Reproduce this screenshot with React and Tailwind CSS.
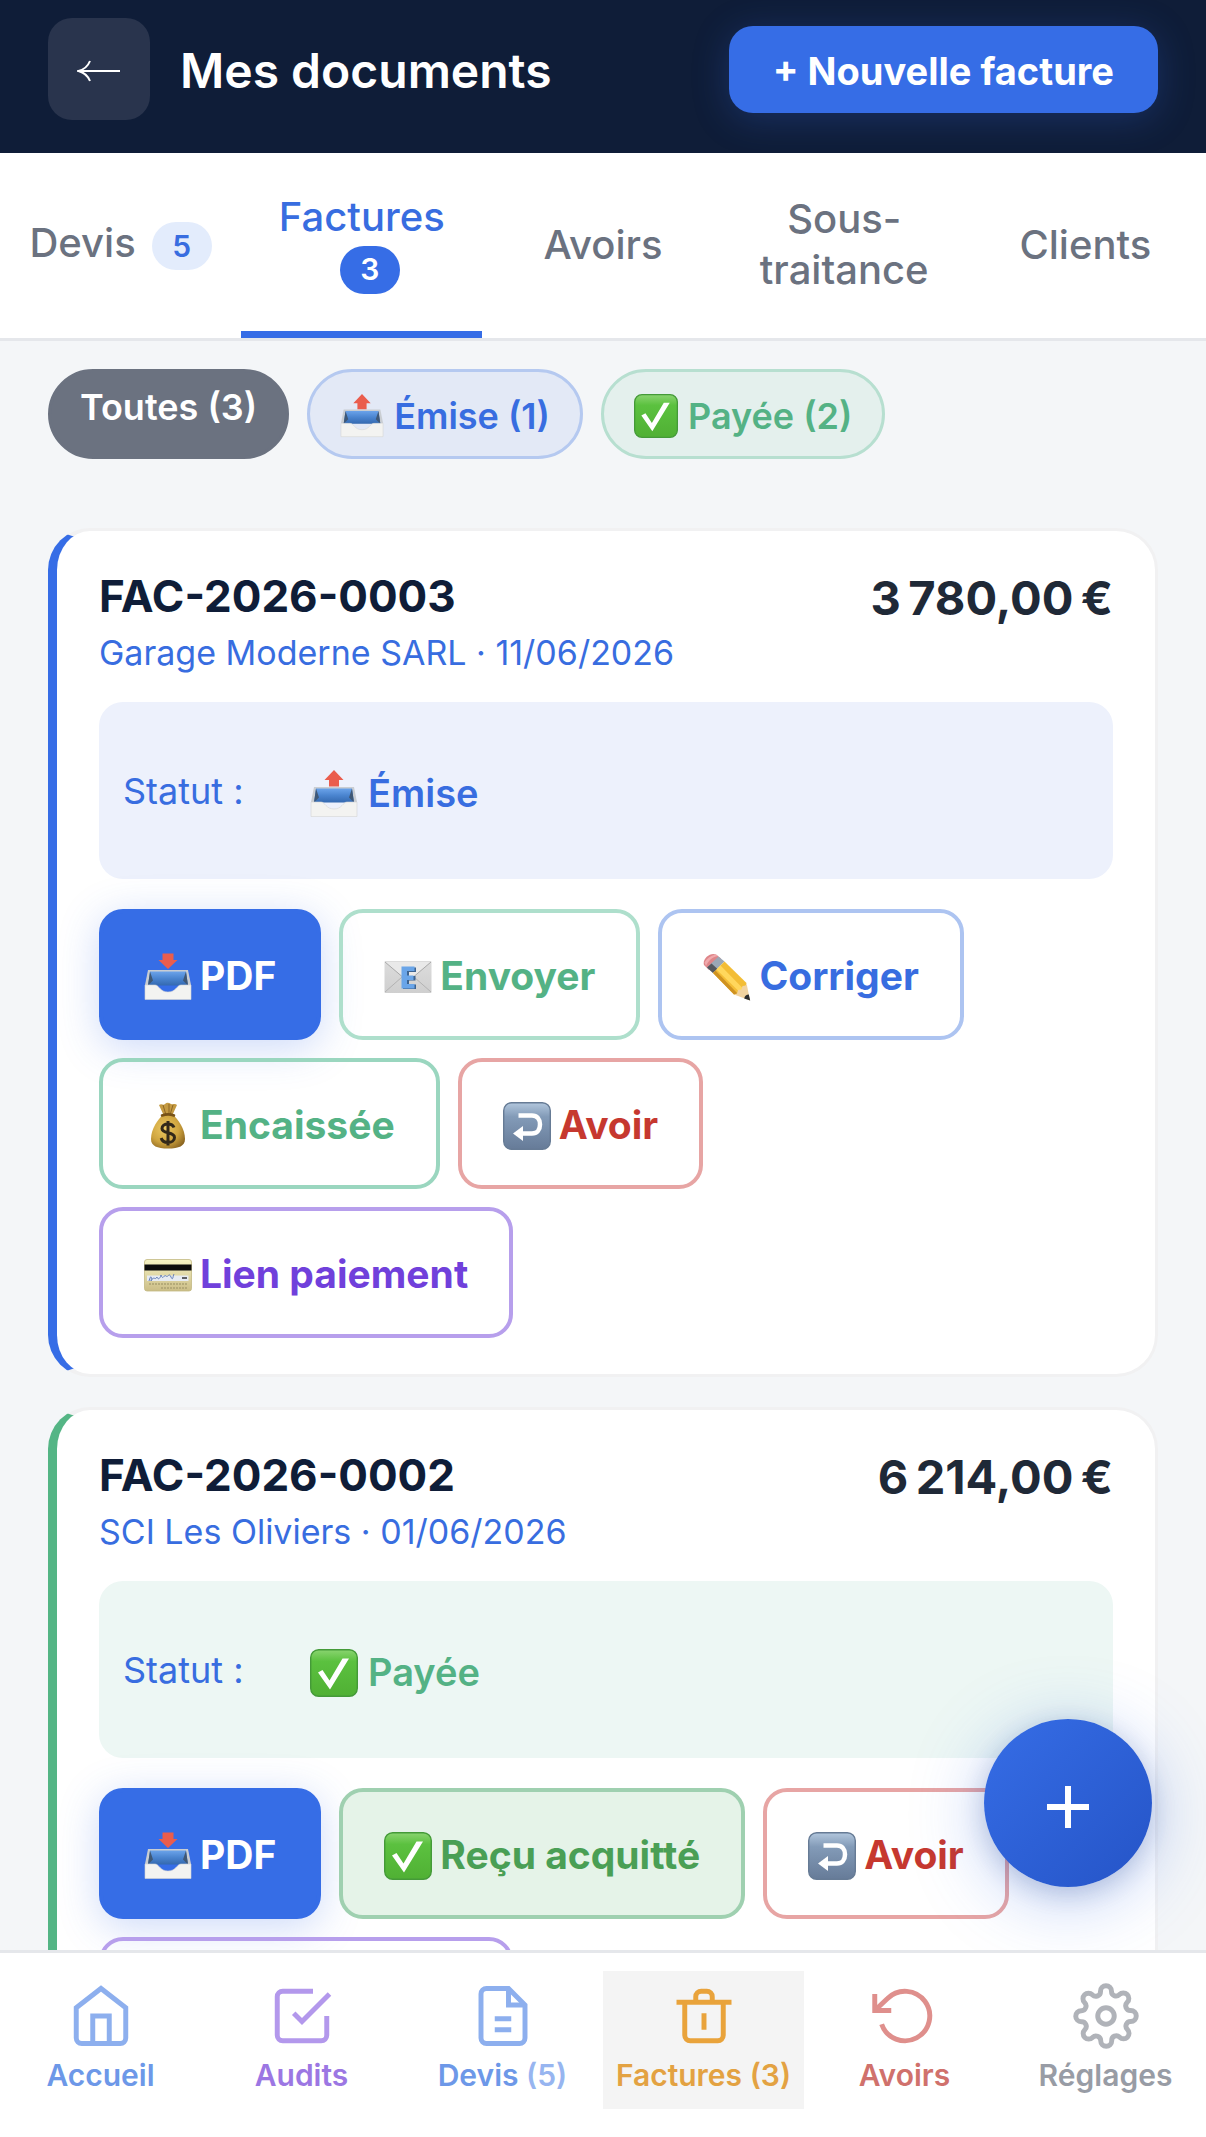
import React, { useState } from 'react';

/* ---------- Petites illustrations ---------- */

function Tray({ direction, className }) {
  const isUp = direction === 'up';
  return (
    <svg viewBox="0 0 48 48" className={className} aria-hidden="true">
      <defs>
        <linearGradient id={`tray-${direction}`} x1="0" y1="0" x2="0" y2="1">
          <stop offset="0" stopColor="#6ba3ea" />
          <stop offset="0.5" stopColor="#4a84cf" />
          <stop offset="1" stopColor="#3469b0" />
        </linearGradient>
      </defs>
      <path d="M4 17h40l3 15H1z" fill="#c9cdd2" />
      <path d="M6 18.500h36l2 14H4z" fill={`url(#tray-${direction})`} />
      <path d="M6 18.500l3 9-5 5zM42 18.500l-3 9 5 5z" fill="#3f5876" />
      <path
        d="M1 32h10c4 0 5 7 13 7s9-7 13-7h10v14.500H1z"
        fill="#f3f3f1"
        stroke="#d5d5d3"
        strokeWidth="0.600"
      />
      {isUp ? (
        <path d="M24 0l9.500 10H29v6.500H19V10h-4.500z" fill="#ea5d4d" />
      ) : (
        <path d="M24 16L14.500 7H18.500V0.500h11V7h4z" fill="#ea5d4d" />
      )}
    </svg>
  );
}

function CheckBadge({ className }) {
  return (
    <svg viewBox="0 0 48 48" className={className} aria-hidden="true">
      <defs>
        <linearGradient id="check-bg" x1="0" y1="0" x2="0" y2="1">
          <stop offset="0" stopColor="#8ad470" />
          <stop offset="0.250" stopColor="#5bc13f" />
          <stop offset="1" stopColor="#50b034" />
        </linearGradient>
      </defs>
      <rect x="0.700" y="0.700" width="46.600" height="46.600" rx="8" fill="url(#check-bg)" stroke="#449a38" strokeWidth="1.400" />
      <path d="M8 23.500l4.500-2.500 7 10.500L32.500 9.500H39L20 40.500z" fill="#fff" />
    </svg>
  );
}

function EmailBadge({ className }) {
  return (
    <svg viewBox="0 0 48 48" className={className} aria-hidden="true">
      <defs>
        <linearGradient id="mail-bg" x1="0" y1="0" x2="0" y2="1">
          <stop offset="0" stopColor="#dcdcdc" />
          <stop offset="1" stopColor="#cfcfcf" />
        </linearGradient>
      </defs>
      <rect x="0.500" y="8" width="47" height="32" rx="1" fill="url(#mail-bg)" />
      <path d="M1 9l20 17c2 1.600 4 1.600 6 0L47 9" fill="#e9e9e9" stroke="#a9a9a9" strokeWidth="1" />
      <path d="M1 39l17-15M47 39L30 24" stroke="#b3b3b3" strokeWidth="1" />
      <path d="M19 14.500h13v4.500h-7v4h6.500v4.500H25v4h7V36H19z" fill="#3d6390" />
      <path d="M17.500 13.500h13V18h-7.500v4.500h6.500V27H23v4h7.500v4.500h-13z" fill="#6aa5e8" />
    </svg>
  );
}

function Pencil({ className }) {
  return (
    <svg viewBox="0 0 48 48" className={className} aria-hidden="true">
      <path d="M1 12C-1 6 7-1 13 1.500l5 4L6 17z" fill="#de8589" />
      <path d="M1.500 9.500C4 5 8 2.500 13 1.500l2 1.500C9 4 5 8 3 13z" fill="#f0a9ac" />
      <path d="M4 14.500L15.500 3.500l6 5L10 20z" fill="#9ba7b5" />
      <path d="M4 14.500l4.500-4 6 5.500L10 20z" fill="#55585e" />
      <path d="M10 20L21.500 8.500 43.500 30l-1 3.500-8 8.500-3.500-.5z" fill="#f3bd35" />
      <path d="M13.500 16.500l4-4 23.500 24-4 3z" fill="#ffd75c" />
      <path d="M10 20l2.500-2.500L35 41l-4 .5z" fill="#cf9221" />
      <path d="M43.500 30L47 47.500 31 41.500l3-1 1-3.500 3.500-.500 1-3.500 3.500-.5z" fill="#f2d3a0" />
      <path d="M45.800 41.500l1.400 6-6-2c.5-2.500 2.200-4 4.600-4z" fill="#2c2c2e" />
    </svg>
  );
}

function MoneyBag({ className }) {
  return (
    <svg viewBox="0 0 48 48" className={className} aria-hidden="true">
      <defs>
        <radialGradient id="bag-bg" cx="0.400" cy="0.400" r="0.700">
          <stop offset="0" stopColor="#ecc962" />
          <stop offset="0.600" stopColor="#cfa43e" />
          <stop offset="1" stopColor="#8b6521" />
        </radialGradient>
      </defs>
      <path d="M15 3c3-2 4 1 6-1s4-1 6 0 4-1 6 1l-5 11h-8z" fill="#c49a42" />
      <path d="M19 3l3 10M25 2v11M29 3l-3 10" stroke="#8b6523" strokeWidth="1" />
      <path d="M19 13h10c5 4 12 14 12 24 0 7-6 9.500-17 9.500S7 44 7 37c0-10 7-20 12-24z" fill="url(#bag-bg)" />
      <path d="M18 13.500c4-1.500 8-1.500 12 0" stroke="#775218" strokeWidth="2.500" fill="none" strokeLinecap="round" />
      <path
        d="M30 25.500c-1-2.500-3.500-3.500-6-3.500-3.500 0-6 1.700-6 4.500 0 6 12.500 2.500 12.500 9 0 3-2.800 5-6.500 5-3.300 0-6-1.500-6.800-4.500M24 19v24.500"
        stroke="#33291a"
        strokeWidth="3"
        fill="none"
      />
    </svg>
  );
}

function ReturnArrow({ className }) {
  return (
    <svg viewBox="0 0 48 48" className={className} aria-hidden="true">
      <defs>
        <linearGradient id="return-bg" x1="0" y1="0" x2="0" y2="1">
          <stop offset="0" stopColor="#b2c7dd" />
          <stop offset="0.300" stopColor="#839bb8" />
          <stop offset="1" stopColor="#667b98" />
        </linearGradient>
      </defs>
      <rect x="0.700" y="0.700" width="46.600" height="46.600" rx="8" fill="url(#return-bg)" stroke="#667b95" strokeWidth="1.400" />
      <path d="M15.500 13.500H29c5 0 8 3.500 8 9s-3 9-8 9H18" stroke="#fff" strokeWidth="4.500" fill="none" />
      <path d="M10 31.500l10-7.500v15z" fill="#fff" />
    </svg>
  );
}

function CreditCard({ className }) {
  return (
    <svg viewBox="0 0 48 48" className={className} aria-hidden="true">
      <defs>
        <linearGradient id="card-bg" x1="0" y1="0" x2="0" y2="1">
          <stop offset="0" stopColor="#f6f3c4" />
          <stop offset="1" stopColor="#cbbd86" />
        </linearGradient>
      </defs>
      <rect x="0.500" y="8.500" width="47" height="31.500" rx="2.500" fill="url(#card-bg)" stroke="#c3b983" strokeWidth="0.800" />
      <rect x="0.500" y="13.500" width="47" height="6" fill="#0b0b0b" />
      <rect x="3" y="24.500" width="41.500" height="5.500" fill="#e6ebf2" />
      <path
        d="M5 30c2-7 3-4 2 0 3-6 4 0 6-4 1 3 3 2 4-2 2 6 3-1 5 1s3-4 5 1 2-2 3-3"
        stroke="#6580b8"
        strokeWidth="1"
        fill="none"
      />
      <path d="M38 27h5" stroke="#333" strokeWidth="1.500" />
      <path d="M5 33h38M17 37h26" stroke="#aca172" strokeWidth="1.600" strokeDasharray="2 1" />
    </svg>
  );
}

const EMOJIS = {
  inbox: (cls) => <Tray direction="down" className={cls} />,
  outbox: (cls) => <Tray direction="up" className={cls} />,
  check: (cls) => <CheckBadge className={cls} />,
  email: (cls) => <EmailBadge className={cls} />,
  pencil: (cls) => <Pencil className={cls} />,
  money: (cls) => <MoneyBag className={cls} />,
  back: (cls) => <ReturnArrow className={cls} />,
  card: (cls) => <CreditCard className={cls} />,
};

/* ---------- Données ---------- */

const tabs = [
  { id: 'devis', label: 'Devis', count: 5 },
  { id: 'factures', label: 'Factures', count: 3 },
  { id: 'avoirs', label: 'Avoirs' },
  { id: 'sous-traitance', label: 'Sous-traitance' },
  { id: 'clients', label: 'Clients' },
];

const ACTIONS = {
  pdf: {
    label: 'PDF',
    emoji: 'inbox',
    style: 'border-[#366de6] bg-[#366de6] text-white shadow-[0_8px_40px_rgba(54,109,230,0.25)]',
  },
  envoyer: { label: 'Envoyer', emoji: 'email', style: 'border-[#aedfcc] text-[#54b285]' },
  corriger: { label: 'Corriger', emoji: 'pencil', style: 'border-[#adc4f1] text-[#386de0]' },
  encaissee: { label: 'Encaissée', emoji: 'money', style: 'border-[#9ad6bf] text-[#54b285]' },
  recu: { label: 'Reçu acquitté', emoji: 'check', style: 'border-[#9fd0b0] bg-[#e5f3e8] text-[#4a9f55]' },
  avoir: { label: 'Avoir', emoji: 'back', style: 'border-[#e7a5a4] text-[#c6382f]' },
  lien: { label: 'Lien paiement', emoji: 'card', style: 'border-[#b79fec] text-[#7040db]' },
};

const factures = [
  {
    numero: 'FAC-2026-0003',
    client: 'Garage Moderne SARL',
    date: '11/06/2026',
    montant: '3\u202f780,00\u202f€',
    statut: 'Émise',
    emoji: 'outbox',
    border: 'border-l-[#366de6]',
    box: 'bg-[#edf1fc]',
    text: 'text-[#386de0]',
    actions: ['pdf', 'envoyer', 'corriger', 'encaissee', 'avoir', 'lien'],
  },
  {
    numero: 'FAC-2026-0002',
    client: 'SCI Les Oliviers',
    date: '01/06/2026',
    montant: '6\u202f214,00\u202f€',
    statut: 'Payée',
    emoji: 'check',
    border: 'border-l-[#54b585]',
    box: 'bg-[#edf7f4]',
    text: 'text-[#54b285]',
    actions: ['pdf', 'recu', 'avoir', 'lien'],
  },
];

const navItems = [
  {
    label: 'Accueil',
    icon: 'text-[#8dafee]',
    text: 'text-[#6d98e8]',
    drawing: (
      <>
        <path d="M3 9l9-7 9 7v11a2 2 0 0 1-2 2H5a2 2 0 0 1-2-2z" />
        <path d="M9 22V12h6v10" />
      </>
    ),
  },
  {
    label: 'Audits',
    icon: 'text-[#b398ec]',
    text: 'text-[#9c77e3]',
    drawing: (
      <>
        <path d="M9 11l3 3L22 4" />
        <path d="M21 12v7a2 2 0 0 1-2 2H5a2 2 0 0 1-2-2V5a2 2 0 0 1 2-2h11" />
      </>
    ),
  },
  {
    label: 'Devis',
    count: 5,
    icon: 'text-[#8dafee]',
    text: 'text-[#6d98e8]',
    drawing: (
      <>
        <path d="M14 2H6a2 2 0 0 0-2 2v16a2 2 0 0 0 2 2h12a2 2 0 0 0 2-2V8z" />
        <path d="M14 2v6h6M9 13h6M9 17h6" />
      </>
    ),
  },
  {
    label: 'Factures',
    count: 3,
    active: true,
    icon: 'text-[#e9a33b]',
    text: 'text-[#e3a242]',
    drawing: (
      <>
        <path d="M2 7h20M5 7v12a2 2 0 0 0 2 2h10a2 2 0 0 0 2-2V7" />
        <path d="M9 7V5a2 2 0 0 1 2-2h2a2 2 0 0 1 2 2v2M12 11v6" />
      </>
    ),
  },
  {
    label: 'Avoirs',
    icon: 'text-[#df8f8c]',
    text: 'text-[#d0716c]',
    drawing: (
      <>
        <path d="M1 4v6h6" />
        <path d="M3.510 15a9 9 0 1 0 2.130-9.360L1 10" />
      </>
    ),
  },
  {
    label: 'Réglages',
    icon: 'text-[#b0b3b9]',
    text: 'text-[#989ca5]',
    drawing: (
      <>
        <circle cx="12" cy="12" r="3" />
        <path d="M19.400 15a1.650 1.650 0 0 0 .33 1.820l.06.06a2 2 0 0 1 0 2.830 2 2 0 0 1-2.830 0l-.06-.06a1.650 1.650 0 0 0-1.820-.33 1.650 1.650 0 0 0-1 1.510V21a2 2 0 0 1-2 2 2 2 0 0 1-2-2v-.09A1.650 1.650 0 0 0 9 19.400a1.650 1.650 0 0 0-1.820.33l-.06.06a2 2 0 0 1-2.830 0 2 2 0 0 1 0-2.830l.06-.06a1.650 1.650 0 0 0 .33-1.820 1.650 1.650 0 0 0-1.510-1H3a2 2 0 0 1-2-2 2 2 0 0 1 2-2h.09A1.650 1.650 0 0 0 4.600 9a1.650 1.650 0 0 0-.33-1.820l-.06-.06a2 2 0 0 1 0-2.830 2 2 0 0 1 2.830 0l.06.06a1.650 1.650 0 0 0 1.820.33H9a1.650 1.650 0 0 0 1-1.510V3a2 2 0 0 1 2-2 2 2 0 0 1 2 2v.09a1.650 1.650 0 0 0 1 1.510 1.650 1.650 0 0 0 1.820-.33l.06-.06a2 2 0 0 1 2.830 0 2 2 0 0 1 0 2.830l-.06.06a1.650 1.650 0 0 0-.33 1.820V9a1.650 1.650 0 0 0 1.510 1H21a2 2 0 0 1 2 2 2 2 0 0 1-2 2h-.09a1.650 1.650 0 0 0-1.510 1z" />
      </>
    ),
  },
];

/* ---------- Composants ---------- */

function Header() {
  return (
    <header className="flex items-start justify-between bg-[#0f1d38] px-12 pt-[18px] pb-[33px]">
      <div className="flex items-center gap-[30px]">
        <button
          type="button"
          aria-label="Retour"
          className="flex size-[102px] items-center justify-center rounded-3xl bg-[#29344d] text-white"
        >
          <svg viewBox="0 0 44 22" className="mt-1 w-11" fill="none" stroke="currentColor" strokeWidth="2" aria-hidden="true">
            <path d="M2 11h41M13 1C11 6 7 9.500 1.500 11 7 12.500 11 16 13 21" />
          </svg>
        </button>
        <h1 className="pt-1 text-[48px] font-semibold text-white">Mes documents</h1>
      </div>
      <button
        type="button"
        className="mt-2 h-[87px] rounded-3xl bg-[#366de6] px-11 pt-1 text-[38px] font-bold text-white shadow-[0_6px_36px_rgba(54,109,230,0.25)]"
      >
        + Nouvelle facture
      </button>
    </header>
  );
}

function Tabs({ tab, setTab }) {
  return (
    <div role="tablist" className="grid grid-cols-5 border-b-3 border-[#e5e7eb] bg-white">
      {tabs.map((t) => {
        const active = t.id === tab;
        return (
          <button
            key={t.id}
            type="button"
            role="tab"
            aria-selected={active}
            onClick={() => setTab(t.id)}
            className={`flex h-[185px] items-center justify-center border-b-7 text-[40px] leading-[51px] font-medium ${
              active ? 'flex-col gap-1 border-[#366de6] text-[#386de0]' : 'border-transparent text-[#6b7280]'
            } ${t.count ? '' : 'pt-1'}`}
          >
            <span>{t.label}</span>
            {t.count && (
              <span
                className={`ml-4 flex h-12 w-[60px] items-center justify-center rounded-full text-[30px] font-semibold ${
                  active ? 'bg-[#366de6] text-white' : 'mt-2 bg-[#e3ecfc] text-[#386de0]'
                }`}
              >
                {t.count}
              </span>
            )}
          </button>
        );
      })}
    </div>
  );
}

function Filters() {
  return (
    <div className="flex flex-wrap gap-[18px] text-[36px] leading-[48px] font-semibold">
      <button
        type="button"
        className="flex h-[90px] items-start rounded-full border-3 border-[#6b7280] bg-[#6b7280] px-[29px] pt-[11px] text-white"
      >
        Toutes (3)
      </button>
      <button
        type="button"
        className="flex h-[90px] items-center gap-[10px] rounded-full border-3 border-[#b5c9f0] bg-[#e3e9f6] px-[30px] pt-1 text-[#386de0]"
      >
        <Tray direction="up" className="size-11" />
        Émise (1)
      </button>
      <button
        type="button"
        className="flex h-[90px] items-center gap-[10px] rounded-full border-3 border-[#b7dfd0] bg-[#e4f0ed] px-[30px] pt-1 text-[#54b285]"
      >
        <CheckBadge className="size-11" />
        Payée (2)
      </button>
    </div>
  );
}

function FactureCard({ facture }) {
  const [statut, setStatut] = useState(facture.statut);
  const selectId = `statut-${facture.numero}`;

  return (
    <article
      className={`rounded-[42px] border-3 border-l-9 border-[#f1f1f2] bg-white px-[42px] py-9 ${facture.border}`}
    >
      <div className="flex items-start justify-between">
        <div>
          <h2 className="text-[44px] leading-[58px] font-bold text-[#0f1d38]">{facture.numero}</h2>
          <p className="text-[34px] leading-[56px] text-[#386de0]">
            {facture.client} · {facture.date}
          </p>
        </div>
        <p className="text-[47px] leading-[62px] font-bold text-[#1f2937]">{facture.montant}</p>
      </div>

      <div className={`mt-[21px] flex h-[177px] items-center rounded-3xl px-6 ${facture.box}`}>
        <label htmlFor={selectId} className="w-[187px] text-[36px] text-[#386de0]">
          Statut :
        </label>
        <div className={`flex items-center gap-[10px] pt-1.5 ${facture.text}`}>
          {EMOJIS[facture.emoji]('size-12')}
          <select
            id={selectId}
            value={statut}
            onChange={(e) => setStatut(e.target.value)}
            className="appearance-none bg-transparent text-[38px] font-semibold"
          >
            <option>Émise</option>
            <option>Payée</option>
          </select>
        </div>
      </div>

      <div className="mt-[30px] flex flex-wrap gap-[18px]">
        {facture.actions.map((key) => {
          const action = ACTIONS[key];
          return (
            <button
              key={key}
              type="button"
              className={`flex h-[131px] items-center gap-2 rounded-3xl border-4 px-[41px] pt-1 text-[39px] font-bold ${action.style}`}
            >
              {EMOJIS[action.emoji]('size-12')}
              {action.label}
            </button>
          );
        })}
      </div>
    </article>
  );
}

function BottomNav() {
  return (
    <nav className="grid grid-cols-6 border-t-3 border-[#e5e7eb] bg-white pt-[18px] pb-7">
      {navItems.map((item) => (
        <a
          key={item.label}
          href="#"
          className={`flex flex-col items-center gap-2 pt-3 pb-4 ${item.active ? 'bg-[#f4f4f4]' : ''}`}
        >
          <svg
            viewBox="0 0 24 24"
            className={`size-[66px] ${item.icon}`}
            fill="none"
            stroke="currentColor"
            strokeWidth="1.800"
            aria-hidden="true"
          >
            {item.drawing}
          </svg>
          <span className={`text-[30px] leading-[36px] font-semibold ${item.text}`}>
            {item.label}
            {item.count && <span className={item.active ? '' : 'text-[#97b5f0]'}> ({item.count})</span>}
          </span>
        </a>
      ))}
    </nav>
  );
}

function App() {
  const [tab, setTab] = useState('factures');

  return (
    <div className="relative flex h-screen flex-col bg-[#f4f6f8] font-['Inter','Liberation_Sans',sans-serif]">
      <Header />
      <Tabs tab={tab} setTab={setTab} />
      <main className="min-h-0 flex-1 overflow-y-auto px-12 pt-7 pb-12 [scrollbar-width:none]">
        <Filters />
        <div className="mt-[69px] flex flex-col gap-[30px]">
          {factures.map((f) => (
            <FactureCard key={f.numero} facture={f} />
          ))}
        </div>
      </main>
      <div className="relative">
        {/* bouton flottant */}
        <button
          type="button"
          aria-label="Ajouter"
          className="absolute right-[54px] bottom-[250px] flex size-[168px] items-center justify-center rounded-full bg-linear-to-br from-[#366de6] to-[#2554c7] pt-2 text-white shadow-[0_12px_72px_rgba(54,109,230,0.35),0_6px_24px_rgba(20,40,90,0.2)]"
        >
          <svg viewBox="0 0 42 42" className="size-[42px]" stroke="currentColor" strokeWidth="6" aria-hidden="true">
            <path d="M21 0v42M0 21h42" />
          </svg>
        </button>
        <div className="relative">
          <BottomNav />
        </div>
      </div>
    </div>
  );
}

export default App;
